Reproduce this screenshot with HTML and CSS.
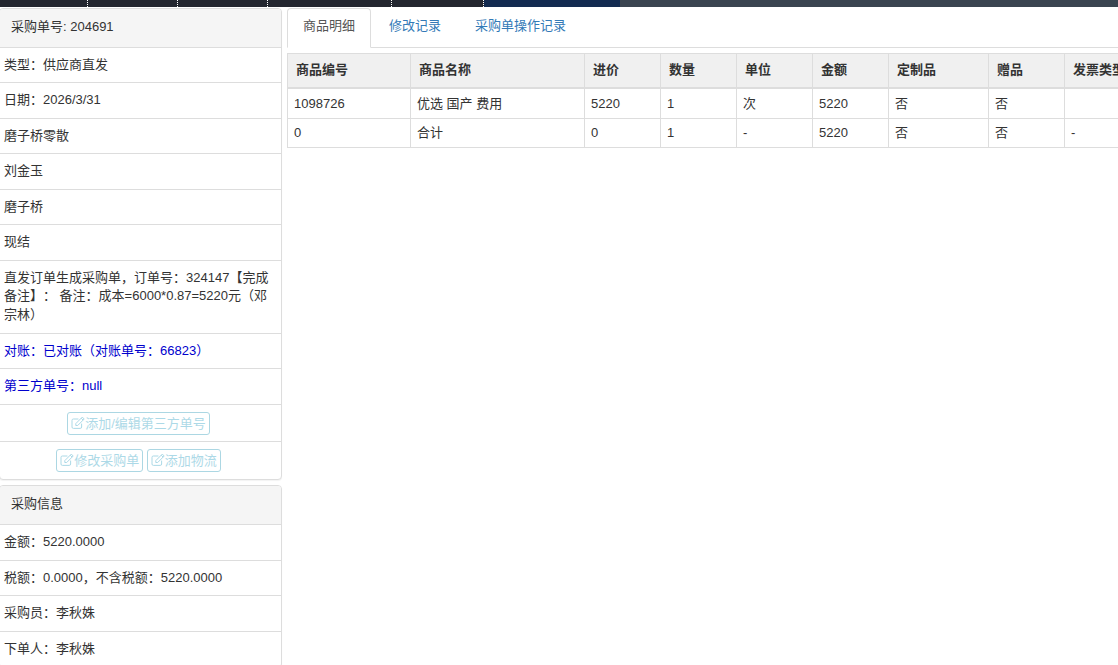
FILE: index.html
```html
<!DOCTYPE html>
<html lang="zh-CN">
<head>
<meta charset="utf-8">
<title>采购单</title>
<link rel="stylesheet" href="styles.css">
</head>
<body>
<svg class="sprite" width="0" height="0" aria-hidden="true">
  <symbol id="edit" viewBox="0 0 14 14">
    <path d="M10.6 7.6V11a1.4 1.4 0 0 1-1.400 1.400H2.400A1.400 1.400 0 0 1 1 11V4.400A1.400 1.400 0 0 1 2.400 3h5" fill="none" stroke="currentColor" stroke-width="1"/>
    <path d="M4.800 7.600 11.300 1.100l1.900 1.900-6.500 6.500H4.800zM10.200 2.200l1.900 1.900" fill="none" stroke="currentColor" stroke-width="1"/>
  </symbol>
</svg>
<div class="topbar">
  <span class="seg seg-a"></span><span class="seg seg-b"></span><span class="seg seg-b"></span><span class="seg seg-c"></span><span class="seg seg-d"></span><span class="seg seg-navy"></span><span class="seg seg-rest"></span>
</div>
<div class="layout">
  <aside class="sidebar">
    <section class="panel">
      <div class="panel-heading">采购单号: 204691</div>
      <div class="row">类型：供应商直发</div>
      <div class="row">日期：2026/3/31</div>
      <div class="row">磨子桥零散</div>
      <div class="row">刘金玉</div>
      <div class="row">磨子桥</div>
      <div class="row">现结</div>
      <div class="row row-wrap">直发订单生成采购单，订单号：324147【完成备注】： 备注：成本=6000*0.87=5220元（邓宗林）</div>
      <div class="row row-blue">对账：已对账（对账单号：66823）</div>
      <div class="row row-blue">第三方单号：null</div>
      <div class="row row-actions">
        <a class="btn"><svg class="icon"><use href="#edit"/></svg>添加/编辑第三方单号</a>
      </div>
      <div class="row row-actions row-last">
        <a class="btn"><svg class="icon"><use href="#edit"/></svg>修改采购单</a>
        <a class="btn"><svg class="icon"><use href="#edit"/></svg>添加物流</a>
      </div>
    </section>
    <section class="panel">
      <div class="panel-heading">采购信息</div>
      <div class="row">金额：5220.0000</div>
      <div class="row">税额：0.0000，不含税额：5220.0000</div>
      <div class="row">采购员：李秋姝</div>
      <div class="row">下单人：李秋姝</div>
    </section>
  </aside>
  <main class="content">
    <nav class="tabs">
      <a class="tab tab-active">商品明细</a>
      <a class="tab">修改记录</a>
      <a class="tab">采购单操作记录</a>
    </nav>
    <table class="grid">
      <colgroup>
        <col class="c-code"><col class="c-name"><col class="c-std"><col class="c-std"><col class="c-std"><col class="c-std"><col class="c-wide"><col class="c-std"><col class="c-last">
      </colgroup>
      <thead>
        <tr><th>商品编号</th><th>商品名称</th><th>进价</th><th>数量</th><th>单位</th><th>金额</th><th>定制品</th><th>赠品</th><th>发票类型</th></tr>
      </thead>
      <tbody>
        <tr><td>1098726</td><td>优选 国产 费用</td><td>5220</td><td>1</td><td>次</td><td>5220</td><td>否</td><td>否</td><td></td></tr>
        <tr><td>0</td><td>合计</td><td>0</td><td>1</td><td>-</td><td>5220</td><td>否</td><td>否</td><td>-</td></tr>
      </tbody>
    </table>
  </main>
</div>
</body>
</html>
```
FILE: styles.css
```css
* { box-sizing: border-box; }
html, body { height: 100%; }
body {
  margin: 0;
  overflow: hidden;
  background: #fff;
  color: #333;
  font-family: "Liberation Sans", "Noto Sans CJK SC", sans-serif;
  font-size: 13px;
  line-height: 1.42857;
  text-spacing-trim: space-all;
}
.sprite { position: absolute; }
.topbar { display: flex; height: 7px; background: #3a4450; }
.seg { display: block; height: 7px; background: #23262f; border-right: 1px dotted #fff; }
.seg-a { width: 88px; }
.seg-b { width: 90px; }
.seg-c { width: 124px; }
.seg-d { width: 92px; }
.seg-navy { width: 136px; background: #132a50; border-right: 0; }
.seg-rest { flex: 1; background: #3a4450; border-right: 0; }
.layout { display: flex; align-items: flex-start; padding-top: 1px; }
.sidebar { width: 283px; flex: none; margin-left: -1px; }
.panel {
  background: #fff;
  border: 1px solid #ddd;
  border-radius: 4px;
  margin-bottom: 5px;
  box-shadow: 0 1px 1px rgba(0, 0, 0, .05);
  overflow: hidden;
}
.panel-heading {
  height: 38.5px;
  padding: 9px 11px;
  background: #f5f5f5;
  border-bottom: 1px solid #ddd;
}
.panel + .panel .panel-heading { height: 39.5px; }
.row { padding: 8px 12px 8px 4px; border-bottom: 1px solid #ddd; color: #333; }
.row-blue { color: #0000cd; }
.row-actions { text-align: center; padding: 7px 8px 5px 4px; height: 37px; }
.row-last { border-bottom: 0; }
.btn {
  display: inline-block;
  padding: 1px 3px;
  font-size: 13px;
  line-height: 19px;
  color: #5bb5d0;
  border: 1px solid #5bb0c8;
  border-radius: 3px;
  opacity: .5;
  white-space: nowrap;
}
.icon { width: 14px; height: 14px; vertical-align: -2px; }
.content { flex: 1; min-width: 0; margin-left: 5px; }
.tabs { display: flex; height: 40px; border-bottom: 1px solid #ddd; }
.tab {
  padding: 8px 15px;
  margin-right: 2px;
  color: #337ab7;
  border: 1px solid transparent;
  border-radius: 4px 4px 0 0;
}
.tab-active {
  color: #555;
  background: #fff;
  border-color: #ddd;
  border-bottom-color: #fff;
  height: 40px;
}
.grid {
  table-layout: fixed;
  width: 867px;
  margin-top: 5px;
  border-collapse: collapse;
  border: 1px solid #ddd;
}
.c-code { width: 123px; }
.c-name { width: 174px; }
.c-std { width: 76px; }
.c-wide { width: 100px; }
.c-last { width: 90px; }
th, td { border: 1px solid #ddd; text-align: left; white-space: nowrap; overflow: hidden; }
th { height: 34px; padding: 5px 8px; background: #f0f0f0; border-bottom-width: 2px; font-weight: 700; }
td { padding: 5px 6px; }
tbody tr:first-child td { height: 31px; padding-top: 6px; padding-bottom: 4px; }
tbody tr:last-child td { height: 29px; padding-top: 5px; padding-bottom: 4px; }
```
